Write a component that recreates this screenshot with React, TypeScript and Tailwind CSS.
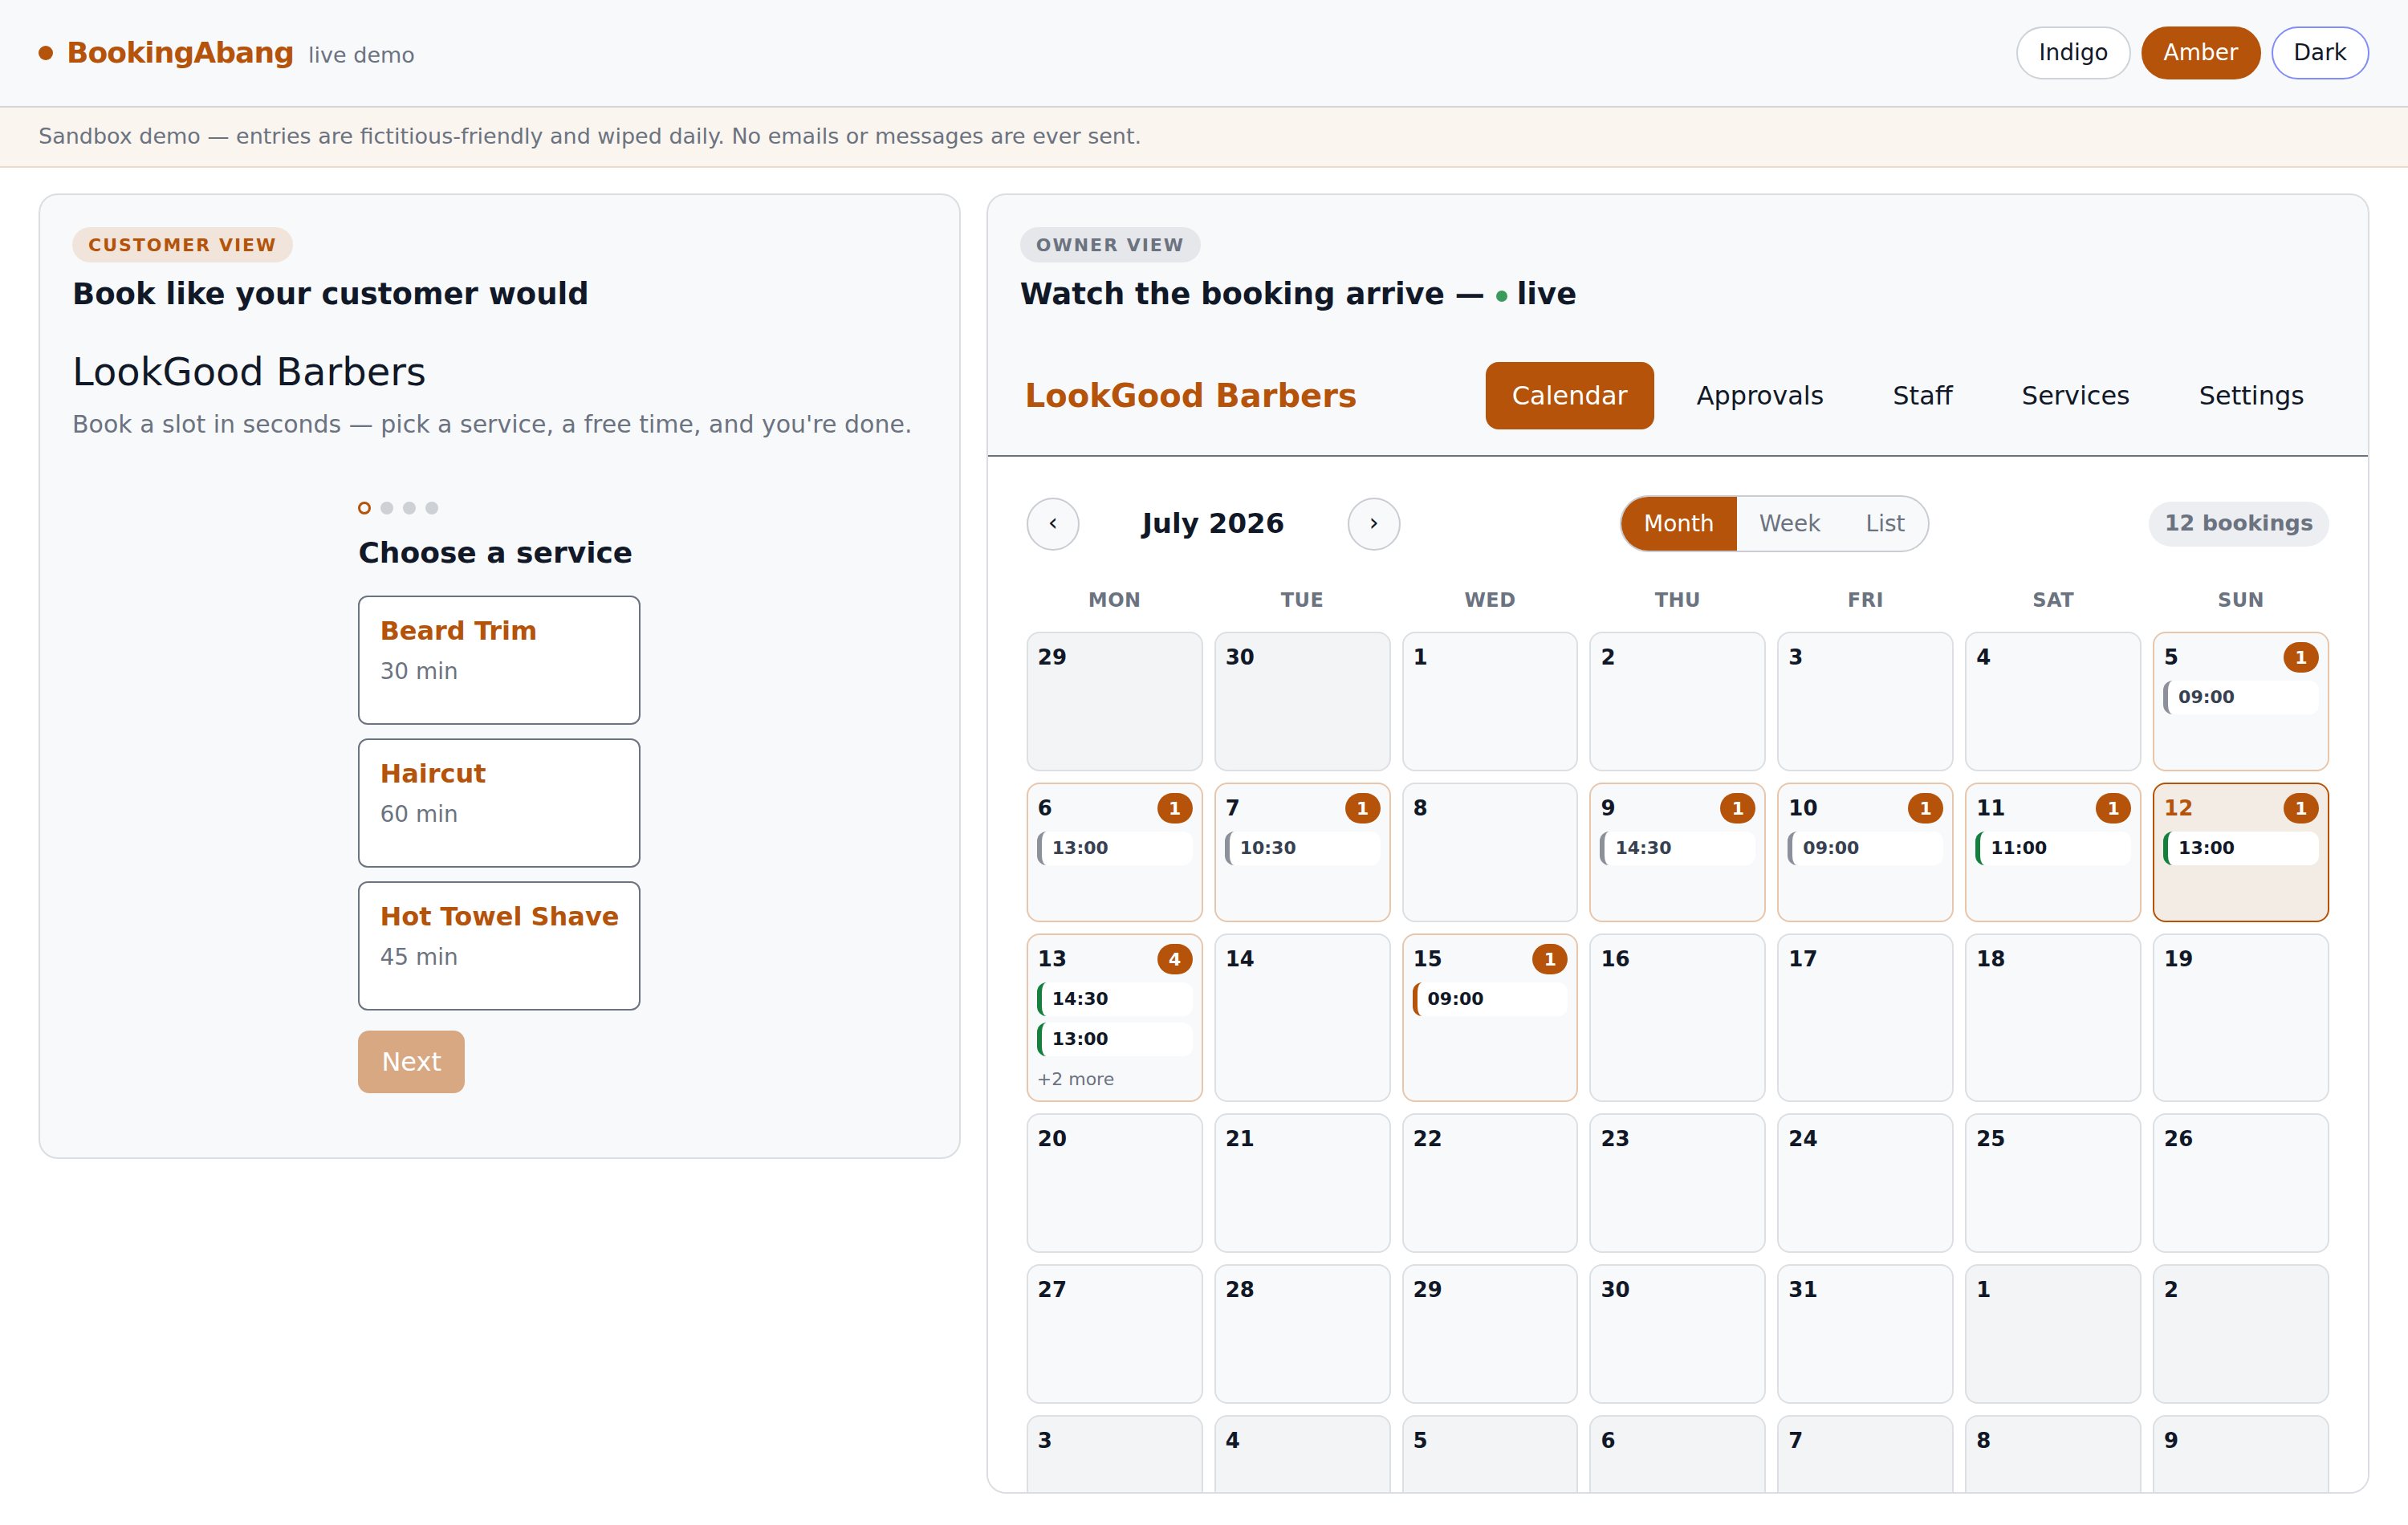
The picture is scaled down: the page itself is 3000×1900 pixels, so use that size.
const ORANGE = "#b45309";

type Tone = "gray" | "green" | "orange";

const BOOKINGS: Record<number, { count: number; events: [string, Tone][]; more?: number }> = {
  5: { count: 1, events: [["09:00", "gray"]] },
  6: { count: 1, events: [["13:00", "gray"]] },
  7: { count: 1, events: [["10:30", "gray"]] },
  9: { count: 1, events: [["14:30", "gray"]] },
  10: { count: 1, events: [["09:00", "gray"]] },
  11: { count: 1, events: [["11:00", "green"]] },
  12: { count: 1, events: [["13:00", "green"]] },
  13: { count: 4, events: [["14:30", "green"], ["13:00", "green"]], more: 2 },
  15: { count: 1, events: [["09:00", "orange"]] },
};

const WEEKS: { d: number; out?: boolean }[][] = [
  [{ d: 29, out: true }, { d: 30, out: true }, { d: 1 }, { d: 2 }, { d: 3 }, { d: 4 }, { d: 5 }],
  [{ d: 6 }, { d: 7 }, { d: 8 }, { d: 9 }, { d: 10 }, { d: 11 }, { d: 12 }],
  [{ d: 13 }, { d: 14 }, { d: 15 }, { d: 16 }, { d: 17 }, { d: 18 }, { d: 19 }],
  [{ d: 20 }, { d: 21 }, { d: 22 }, { d: 23 }, { d: 24 }, { d: 25 }, { d: 26 }],
  [{ d: 27 }, { d: 28 }, { d: 29 }, { d: 30 }, { d: 31 }, { d: 1, out: true }, { d: 2, out: true }],
  [3, 4, 5, 6, 7, 8, 9].map((d) => ({ d, out: true })),
];

const SERVICES = [
  { name: "Beard Trim", mins: "30 min" },
  { name: "Haircut", mins: "60 min" },
  { name: "Hot Towel Shave", mins: "45 min" },
];

function Tag({ children, tone }: { children: React.ReactNode; tone: "orange" | "gray" }) {
  return (
    <span
      className={
        "inline-flex h-[44px] items-center rounded-full px-[20px] text-[22px] font-bold uppercase tracking-[0.09em] " +
        (tone === "orange" ? "bg-[#f1e4da] text-[#b45309]" : "bg-[#e6e7ea] text-[#6b7280]")
      }
    >
      {children}
    </span>
  );
}

function Chip({ time, tone }: { time: string; tone: Tone }) {
  const bar =
    tone === "gray" ? "border-[#8b909a] text-[#374151]" : tone === "green" ? "border-[#15803d] text-[#111827]" : "border-[#b45309] text-[#111827]";
  return (
    <div className={"rounded-[12px] border-l-[6px] bg-white py-[6px] pl-[13px] text-[22px] font-bold leading-[30px] " + bar}>
      {time}
    </div>
  );
}

function DayCell({ d, out }: { d: number; out?: boolean }) {
  const b = out ? undefined : BOOKINGS[d];
  const today = !out && d === 12;
  let cls = "border-[#dcdfe3] bg-[#f8f9fb]";
  if (out) cls = "border-[#dcdfe3] bg-[#f3f4f6]";
  if (b) cls = "border-[#e8c6ab] bg-[#f8f9fb]";
  if (today) cls = "border-[#b45309] bg-[#f3ece5]";
  return (
    <div className={"min-h-[174px] rounded-[16px] border-2 p-[11px] " + cls}>
      <div className="flex h-[38px] items-center justify-between">
        <span className={"pl-[1px] text-[26px] font-bold leading-[36px] " + (today ? "text-[#b45309]" : "text-[#111827]")}>{d}</span>
        {b && (
          <span className="flex h-[38px] min-w-[44px] items-center justify-center rounded-full bg-[#b45309] px-[12px] text-[22px] font-bold text-white">
            {b.count}
          </span>
        )}
      </div>
      {b && (
        <div className="mt-[10px] flex flex-col gap-[8px]">
          {b.events.map(([t, tone], i) => (
            <Chip key={i} time={t} tone={tone} />
          ))}
          {b.more && <div className="mt-[6px] text-[22px] leading-[30px] text-[#6b7280]">+{b.more} more</div>}
        </div>
      )}
    </div>
  );
}

export default function App() {
  return (
    <div className="min-h-screen bg-white text-[#111827]" style={{ fontFamily: '"DejaVu Sans", "Noto Sans", sans-serif' }}>
      {/* top bar */}
      <header className="flex h-[134px] items-center justify-between border-b-2 border-[#d1d5db] bg-[#f8f9fb] px-[48px]">
        <div className="flex items-center">
          <span className="mr-[17px] h-[18px] w-[18px] rounded-full bg-[#b45309]" />
          <span className="text-[36px] font-bold tracking-tight text-[#b45309]">BookingAbang</span>
          <span className="ml-[18px] mt-[6px] text-[27px] text-[#6b7280]">live demo</span>
        </div>
        <div className="flex gap-[13px]">
          <button className="h-[66px] rounded-full border-2 border-[#cfd2d8] bg-white px-[26px] text-[28px] text-[#111827]">Indigo</button>
          <button className="h-[66px] rounded-full border-2 border-[#b45309] bg-[#b45309] px-[26px] text-[28px] text-white">Amber</button>
          <button className="h-[66px] rounded-full border-2 border-[#818cf8] bg-white px-[26px] text-[28px] text-[#111827]">Dark</button>
        </div>
      </header>

      <div className="flex h-[75px] items-center border-b-2 border-[#ecdac9] bg-[#faf5ef] px-[48px] text-[27px] text-[#6b7280]">
        Sandbox demo — entries are fictitious-friendly and wiped daily. No emails or messages are ever sent.
      </div>

      <main className="grid grid-cols-[2fr_3fr] items-start gap-[32px] px-[48px] pt-[32px]">
        {/* customer side */}
        <section className="rounded-[24px] border-2 border-[#dadde2] bg-[#f8f9fb] p-[40px]">
          <Tag tone="orange">Customer view</Tag>
          <h2 className="mt-[15px] text-[37px] font-bold leading-[50px]">Book like your customer would</h2>
          <h1 className="mt-[39px] text-[48px] leading-[64px]">LookGood Barbers</h1>
          <p className="mt-[14px] text-[30px] leading-[40px] text-[#6b7280]">
            Book a slot in seconds — pick a service, a free time, and you're done.
          </p>

          <div className="mx-auto mt-[76px] w-[352px] pb-[40px]">
            <div className="flex gap-[12px]">
              <span className="h-[16px] w-[16px] rounded-full border-[3px] border-[#b45309]" />
              <span className="h-[16px] w-[16px] rounded-full bg-[#cdd0d5]" />
              <span className="h-[16px] w-[16px] rounded-full bg-[#cdd0d5]" />
              <span className="h-[16px] w-[16px] rounded-full bg-[#cdd0d5]" />
            </div>
            <h3 className="mt-[23px] whitespace-nowrap text-[36px] font-bold leading-[50px]">Choose a service</h3>
            <div className="mt-[28px] flex flex-col gap-[17px]">
              {SERVICES.map((s) => (
                <div key={s.name} className="h-[161px] rounded-[12px] border-2 border-[#6b7280] bg-white px-[25px] pt-[20px]">
                  <div className="whitespace-nowrap text-[32px] font-bold leading-[44px] text-[#b45309]">{s.name}</div>
                  <div className="mt-[9px] text-[28px] leading-[40px] text-[#6b7280]">{s.mins}</div>
                </div>
              ))}
            </div>
            <button className="mt-[25px] h-[78px] rounded-[14px] bg-[#d7a882] px-[29px] text-[32px] text-white">Next</button>
          </div>
        </section>

        {/* owner side */}
        <section className="flex h-[1620px] flex-col overflow-hidden rounded-[24px] border-2 border-[#dadde2] bg-[#f8f9fb]">
          <div className="px-[40px] pb-[27px] pt-[40px]">
            <Tag tone="gray">Owner view</Tag>
            <h2 className="mt-[15px] text-[37px] font-bold leading-[50px]">
              Watch the booking arrive —
              <span className="ml-[14px] inline-block h-[14px] w-[14px] rounded-full bg-[#3a9b5c] align-middle" />
              <span className="ml-[12px]">live</span>
            </h2>
          </div>

          <div className="flex items-center justify-between border-b-2 border-[#6b7280] px-[46px] py-[32px]">
            <div className="text-[40px] font-bold text-[#b45309]">LookGood Barbers</div>
            <nav className="flex gap-[20px] text-[32px]">
              <button className="rounded-[16px] bg-[#b45309] px-[33px] py-[18px] leading-[48px] text-white">Calendar</button>
              <button className="px-[33px] py-[18px] leading-[48px]">Approvals</button>
              <button className="px-[33px] py-[18px] leading-[48px]">Staff</button>
              <button className="px-[33px] py-[18px] leading-[48px]">Services</button>
              <button className="px-[33px] py-[18px] leading-[48px]">Settings</button>
            </nav>
          </div>

          <div className="flex-1 bg-white px-[48px] pt-[48px]">
            <div className="flex h-[71px] items-center justify-between">
              <div className="flex items-center gap-[16px]">
                <button className="flex h-[66px] w-[66px] items-center justify-center rounded-full border-2 border-[#c9ccd2] bg-[#f8f9fb] pb-[4px] text-[30px] text-[#111827]">
                  ‹
                </button>
                <div className="w-[302px] text-center text-[34px] font-bold">July 2026</div>
                <button className="flex h-[66px] w-[66px] items-center justify-center rounded-full border-2 border-[#c9ccd2] bg-[#f8f9fb] pb-[4px] text-[30px] text-[#111827]">
                  ›
                </button>
              </div>
              <div className="flex h-[71px] overflow-hidden rounded-full border-2 border-[#c9ccd2] bg-[#f8f9fb] text-[28px]">
                <button className="bg-[#b45309] px-[28px] text-white">Month</button>
                <button className="px-[28px] text-[#6b7280]">Week</button>
                <button className="px-[28px] text-[#6b7280]">List</button>
              </div>
              <span className="flex h-[56px] items-center rounded-full bg-[#eceef1] px-[20px] text-[27px] font-bold text-[#6b7280]">
                12 bookings
              </span>
            </div>

            <div className="mt-[44px] grid grid-cols-7 gap-[14px]">
              {["MON", "TUE", "WED", "THU", "FRI", "SAT", "SUN"].map((w) => (
                <div key={w} className="text-center text-[24px] font-bold leading-[32px] tracking-[0.02em] text-[#6b7280]">
                  {w}
                </div>
              ))}
            </div>

            <div className="mt-[23px] grid grid-cols-7 gap-[14px]">
              {WEEKS.flat().map((c, i) => (
                <DayCell key={i} d={c.d} out={c.out} />
              ))}
            </div>
          </div>
        </section>
      </main>
    </div>
  );
}
